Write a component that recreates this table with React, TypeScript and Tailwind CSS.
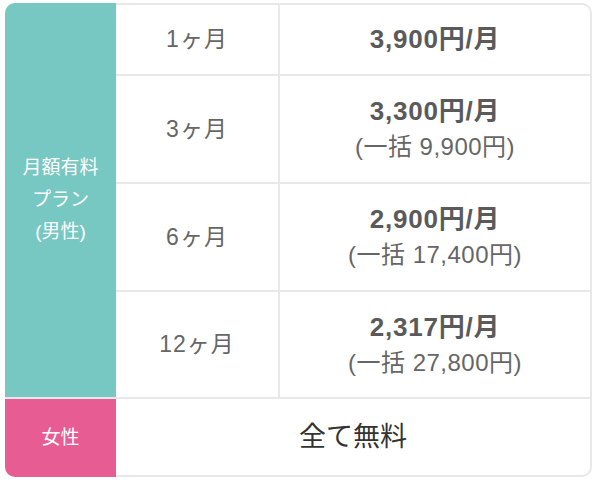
import React from "react";

const font = { fontFamily: '"Liberation Sans", "Noto Sans CJK JP", sans-serif' };

export default function App() {
  const rows = [
    { m: "1ヶ月", p: "3,900円/月", s: null, h: "h-[73px]", top: true },
    { m: "3ヶ月", p: "3,300円/月", s: "(一括 9,900円)", h: "h-[108px]", top: false },
    { m: "6ヶ月", p: "2,900円/月", s: "(一括 17,400円)", h: "h-[108px]", top: false },
    { m: "12ヶ月", p: "2,317円/月", s: "(一括 27,800円)", h: "h-[105px]", top: false, last: true },
  ];
  return (
    <div className="w-[602px] h-[504px] bg-white pl-[5px] pt-[3px]" style={font}>
      <div className="grid w-[587px] grid-cols-[111px_164px_312px]">
        <div className="row-span-4 bg-[#77c7c3] rounded-tl-[10px] flex flex-col items-center justify-center text-white text-[19px] leading-[32px]">
          <div>月額有料</div>
          <div>プラン</div>
          <div>(男性)</div>
        </div>
        {rows.map((r, i) => (
          <React.Fragment key={i}>
            <div
              className={`${r.h} flex items-center justify-center border-r-2 border-[#e8e8e8] ${r.top ? "border-t-2" : ""} ${r.last ? "" : "border-b-2"} text-[#666] text-[23px] tracking-[1px]`}
            >
              {r.m}
            </div>
            <div
              className={`${r.h} flex flex-col items-center justify-center border-r-2 border-[#e8e8e8] ${r.top ? "border-t-2 rounded-tr-[10px]" : ""} ${r.last ? "" : "border-b-2"}`}
            >
              <div className="text-[#5a5a5a] text-[26px] font-bold leading-[35px] tracking-[0.8px]">{r.p}</div>
              {r.s && <div className="text-[#666] text-[24px] leading-[35px] tracking-[0.5px]">{r.s}</div>}
            </div>
          </React.Fragment>
        ))}
        <div className="h-[80px] bg-[#e65c93] rounded-bl-[10px] border-t-2 border-[#e8e8e8] flex items-center justify-center text-white text-[19px]">
          女性
        </div>
        <div className="col-span-2 h-[80px] border-t-2 border-b-2 border-r-2 border-[#e8e8e8] rounded-br-[10px] flex items-center justify-center text-[#333] text-[27px]">
          全て無料
        </div>
      </div>
    </div>
  );
}
